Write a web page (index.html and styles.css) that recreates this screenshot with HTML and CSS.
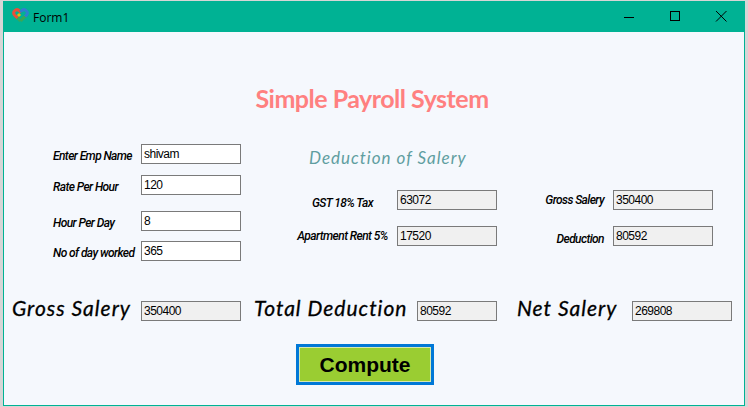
FILE: index.html
```html
<!DOCTYPE html>
<html lang="en">
<head>
    <meta charset="UTF-8">
    <title>Form1</title>
    <link rel="stylesheet" href="styles.css">
</head>
<body>
    <div class="window">
        <div class="titlebar">
            <svg class="app-icon" width="17" height="15" viewBox="0 0 17 15">
                <path d="M8.5 13 L3 7.5" fill="none" stroke="#3aa757" stroke-width="3"/>
                <path d="M8.5 13 L14 7.5" fill="none" stroke="#3aa757" stroke-width="3"/>
                <path d="M5.5 10 L2.5 7 A3.2 3.2 0 0 1 7 2.5 L9 4.5" fill="none" stroke="#e8503a" stroke-width="3"/>
                <path d="M8 3.5 L10 2.5 A3.2 3.2 0 0 1 14.5 7 L13 8.5" fill="none" stroke="#2f7fd0" stroke-width="3"/>
                <path d="M6 6 L8 8" fill="none" stroke="#f5b400" stroke-width="3"/>
            </svg>
            <span class="title">Form1</span>
            <div class="controls">
                <svg width="46" height="30" viewBox="0 0 46 30"><path d="M18 15.5 H28" stroke="#000" fill="none"/></svg>
                <svg width="46" height="30" viewBox="0 0 46 30"><rect x="18.5" y="9.5" width="9" height="9" stroke="#000" fill="none"/></svg>
                <svg width="46" height="30" viewBox="0 0 46 30"><path d="M18 9 L28.5 19.5 M28.5 9 L18 19.5" stroke="#000" fill="none"/></svg>
            </div>
        </div>

        <h1 class="heading">Simple Payroll System</h1>

        <div class="forms">
            <div class="col-emp">
                <div class="row">
                    <label class="small-label low">Enter Emp Name</label>
                    <input class="field" type="text" value="shivam">
                </div>
                <div class="row row-a">
                    <label class="small-label low">Rate Per Hour</label>
                    <input class="field" type="text" value="120">
                </div>
                <div class="row row-b">
                    <label class="small-label low">Hour Per Day</label>
                    <input class="field" type="text" value="8">
                </div>
                <div class="row row-c">
                    <label class="small-label low">No of day worked</label>
                    <input class="field" type="text" value="365">
                </div>
            </div>
            <div class="col-deduct">
                <h2 class="subheading">Deduction of Salery</h2>
                <div class="row">
                    <label class="small-label lower">GST 18% Tax</label>
                    <input class="field" type="text" value="63072" readonly>
                </div>
                <div class="row row-d">
                    <label class="small-label">Apartment Rent 5%</label>
                    <input class="field" type="text" value="17520" readonly>
                </div>
            </div>
            <div class="col-totals">
                <div class="row">
                    <label class="small-label">Gross Salery</label>
                    <input class="field" type="text" value="350400" readonly>
                </div>
                <div class="row row-d">
                    <label class="small-label lower">Deduction</label>
                    <input class="field" type="text" value="80592" readonly>
                </div>
            </div>
        </div>

        <div class="summary">
            <label class="big-label gross">Gross Salery</label>
            <input class="field" type="text" value="350400" readonly>
            <label class="big-label total">Total Deduction</label>
            <input class="field short" type="text" value="80592" readonly>
            <label class="big-label net">Net Salery</label>
            <input class="field" type="text" value="269808" readonly>
        </div>

        <button class="compute">Compute</button>
    </div>
</body>
</html>
```

FILE: styles.css
```css
* {
    box-sizing: border-box;
    padding: 0;
    margin: 0;
}
body {
    background-color: #d6d6d6;
    width: 748px;
    height: 407px;
    overflow: hidden;
    padding: 1px 3px;
    font-family: "Liberation Sans", sans-serif;
}
.window {
    width: 742px;
    height: 405px;
    background-color: #f5f8fd;
    border: 1px solid #00b294;
}
.titlebar {
    display: flex;
    align-items: center;
    height: 30px;
    background-color: #00b294;
    padding-left: 8px;
}
.app-icon {
    margin-top: -4px;
}
.title {
    font-family: "Open Sans", sans-serif;
    font-size: 12px;
    color: #000;
    margin-left: 4px;
}
.controls {
    display: flex;
    margin-left: auto;
}
.heading {
    font-family: "Lato", sans-serif;
    font-size: 25px;
    font-weight: 700;
    letter-spacing: -0.5px;
    line-height: 32px;
    color: #ff8080;
    text-align: center;
    margin-top: 50px;
    margin-bottom: 30px;
    margin-right: 4px;
}
.forms {
    display: grid;
    grid-template-columns: 237px 256px 216px;
    height: 117px;
}
.row {
    display: flex;
    align-items: center;
}
.row-a {
    margin-top: 11px;
}
.row-b {
    margin-top: 16px;
}
.row-c {
    margin-top: 10px;
}
.row-d {
    margin-top: 16px;
}
.small-label {
    font-family: "Roboto", sans-serif;
    font-size: 12px;
    font-weight: 500;
    font-style: italic;
    letter-spacing: -0.6px;
    color: #000;
    white-space: nowrap;
}
.small-label.low {
    padding-top: 4px;
}
.small-label.lower {
    padding-top: 6px;
}
.field {
    width: 100px;
    height: 20px;
    flex: none;
    border: 1px solid #7a7a7a;
    background-color: #fff;
    font-family: "Liberation Sans", sans-serif;
    font-size: 12px;
    letter-spacing: -0.5px;
    color: #000;
    padding: 0 2px;
    outline: none;
}
.field[readonly] {
    background-color: #f0f0f0;
}
.field.short {
    width: 80px;
}
.col-emp {
    padding-left: 49px;
}
.col-emp .small-label {
    width: 88px;
}
.col-deduct {
    padding-left: 53px;
}
.col-deduct .small-label {
    width: 97px;
    text-align: center;
}
.col-deduct .field {
    margin-left: 6px;
}
.subheading {
    font-family: "Lato", sans-serif;
    font-size: 17px;
    font-weight: 400;
    font-style: italic;
    letter-spacing: 1px;
    line-height: 24px;
    color: #5f9ea0;
    margin-left: 15px;
    margin-bottom: 20px;
    margin-top: 2px;
    white-space: nowrap;
}
.col-totals {
    padding-top: 46px;
}
.col-totals .small-label {
    width: 107px;
    text-align: right;
}
.col-totals .field {
    margin-left: 9px;
}
.summary {
    display: flex;
    align-items: flex-start;
    height: 20px;
    margin-top: 40px;
}
.big-label {
    font-family: "Lato", sans-serif;
    font-size: 21px;
    font-style: italic;
    letter-spacing: 1px;
    line-height: 20px;
    margin-top: -3px;
    -webkit-text-stroke: 0.3px #000;
    color: #000;
    white-space: nowrap;
}
.gross {
    margin-left: 8px;
    width: 129px;
}
.total {
    margin-left: 13px;
    width: 163px;
}
.net {
    margin-left: 20px;
    width: 115px;
}
.compute {
    display: block;
    width: 138px;
    height: 41px;
    margin-top: 23px;
    margin-left: 292px;
    background-color: #9acd32;
    border: 3px solid #0078d7;
    box-shadow: inset 0 0 0 1px #d8e8b0;
    font-family: "Liberation Sans", sans-serif;
    font-size: 21px;
    font-weight: 700;
    color: #000;
}
```
